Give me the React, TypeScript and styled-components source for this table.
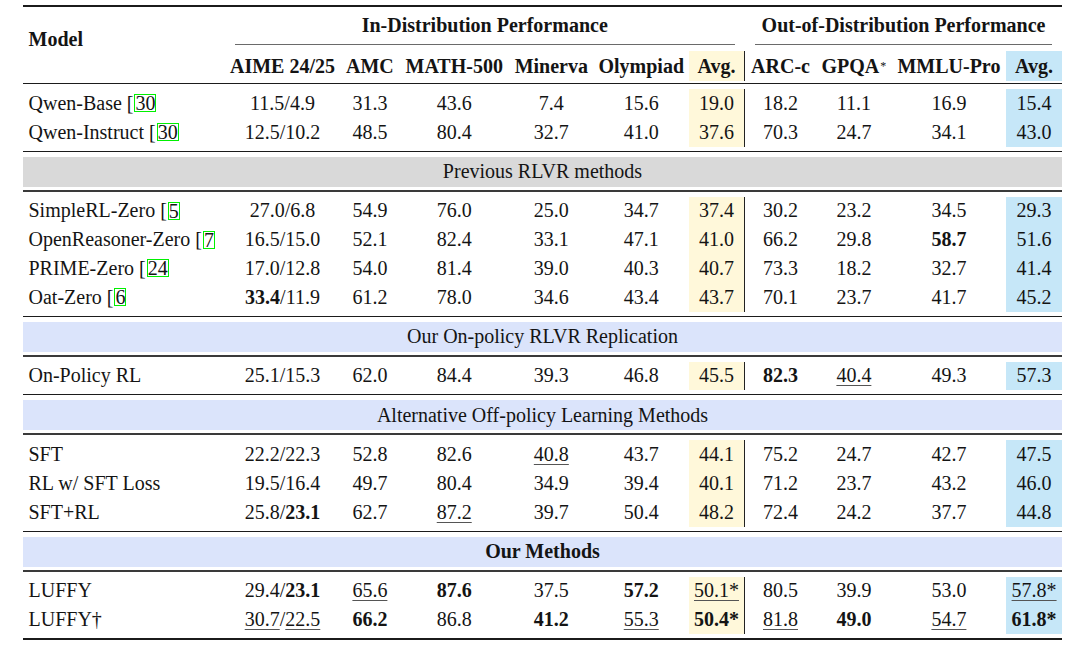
import React from "react";
import styled, { createGlobalStyle } from "styled-components";

const Global = createGlobalStyle`
  html, body { margin: 0; padding: 0; background: #ffffff; }
  body {
    font-family: "Liberation Serif", "Times New Roman", serif;
    color: #141414;
  }
`;

const COLS =
  "201.5px 116px 58.8px 109.9px 84.3px 95.5px 56px 71px 75.8px 114.3px 56px";

type Tone = "none" | "yellow" | "blue";

const TONES: Record<Tone, string> = {
  none: "transparent",
  yellow: "#fff8da",
  blue: "#c6e7f8",
};

const Page = styled.div`
  width: 1080px;
  height: 645px;
  padding: 5px 0 0 23px;
  box-sizing: border-box;
  overflow: hidden;
`;

const Table = styled.div`
  width: 1039px;
  display: flex;
  flex-direction: column;
  font-size: 20px;
`;

const Rule = styled.div<{ $w: number; $c?: string }>`
  height: ${(p) => p.$w}px;
  background: ${(p) => p.$c ?? "#1b1b1b"};
`;

const HeadGrid = styled.div`
  display: grid;
  grid-template-columns: ${COLS};
  grid-template-rows: 38px 30px;
  row-gap: 6px;
  padding-bottom: 2px;
`;

const ModelHead = styled.div`
  grid-row: 1 / 3;
  display: flex;
  align-items: center;
  padding: 0 0 10px 5.5px;
  font-weight: 700;
`;

const GroupHead = styled.div<{ $span: number }>`
  grid-column: span ${(p) => p.$span};
  display: flex;
  padding: 0 10px;
`;

const GroupLabel = styled.div`
  flex: 1;
  display: flex;
  align-items: center;
  justify-content: center;
  border-bottom: 1px solid #6a6a6a;
  font-weight: 700;
  white-space: nowrap;
`;

const ColHead = styled.div<{ $tone: Tone; $bar?: boolean }>`
  display: flex;
  align-items: center;
  justify-content: center;
  font-weight: 700;
  white-space: nowrap;
  background: ${(p) => TONES[p.$tone]};
  box-sizing: border-box;
  border-right: ${(p) => (p.$bar ? "1px solid #222" : "none")};
`;

const Sup = styled.sup`
  font-size: 12px;
  font-weight: 400;
  vertical-align: 7px;
  line-height: 0;
  margin-left: 1px;
`;

const Group = styled.div`
  display: flex;
  flex-direction: column;
  padding: 5px 0 4px;
`;

const Row = styled.div`
  display: grid;
  grid-template-columns: ${COLS};
  height: 28.75px;
`;

const NameCell = styled.div`
  display: flex;
  align-items: center;
  padding-left: 5.5px;
  white-space: nowrap;
`;

const Cell = styled.div<{ $tone: Tone; $bar?: boolean }>`
  display: flex;
  align-items: center;
  justify-content: center;
  white-space: nowrap;
  background: ${(p) => TONES[p.$tone]};
  box-sizing: border-box;
  border-right: ${(p) => (p.$bar ? "1px solid #222" : "none")};
`;

const Cite = styled.span`
  display: inline-block;
  line-height: 16px;
  border: 1.5px solid #00f000;
  margin-left: 1px;
`;

const Band = styled.div<{ $bg: string; $bold?: boolean }>`
  height: 30px;
  margin: 5px 0 3px;
  background: ${(p) => p.$bg};
  display: flex;
  align-items: center;
  justify-content: center;
  font-weight: ${(p) => (p.$bold ? 700 : 400)};
`;

const B = styled.span`
  font-weight: 700;
`;

const U = styled.span`
  text-decoration: underline;
  text-decoration-thickness: 1px;
  text-underline-offset: 3px;
  text-decoration-color: #555;
`;

type RowData = { name: string; cite?: string; vals: string[] };

const GROUPS: { band?: { text: string; bg: string; bold?: boolean }; rows: RowData[] }[] = [
  {
    rows: [
      { name: "Qwen-Base", cite: "30", vals: ["11.5/4.9", "31.3", "43.6", "7.4", "15.6", "19.0", "18.2", "11.1", "16.9", "15.4"] },
      { name: "Qwen-Instruct", cite: "30", vals: ["12.5/10.2", "48.5", "80.4", "32.7", "41.0", "37.6", "70.3", "24.7", "34.1", "43.0"] },
    ],
  },
  {
    band: { text: "Previous RLVR methods", bg: "#d9d9d9" },
    rows: [
      { name: "SimpleRL-Zero", cite: "5", vals: ["27.0/6.8", "54.9", "76.0", "25.0", "34.7", "37.4", "30.2", "23.2", "34.5", "29.3"] },
      { name: "OpenReasoner-Zero", cite: "7", vals: ["16.5/15.0", "52.1", "82.4", "33.1", "47.1", "41.0", "66.2", "29.8", "!58.7!", "51.6"] },
      { name: "PRIME-Zero", cite: "24", vals: ["17.0/12.8", "54.0", "81.4", "39.0", "40.3", "40.7", "73.3", "18.2", "32.7", "41.4"] },
      { name: "Oat-Zero", cite: "6", vals: ["!33.4!/11.9", "61.2", "78.0", "34.6", "43.4", "43.7", "70.1", "23.7", "41.7", "45.2"] },
    ],
  },
  {
    band: { text: "Our On-policy RLVR Replication", bg: "#dbe4fb" },
    rows: [
      { name: "On-Policy RL", vals: ["25.1/15.3", "62.0", "84.4", "39.3", "46.8", "45.5", "!82.3!", "~40.4~", "49.3", "57.3"] },
    ],
  },
  {
    band: { text: "Alternative Off-policy Learning Methods", bg: "#dbe4fb" },
    rows: [
      { name: "SFT", vals: ["22.2/22.3", "52.8", "82.6", "~40.8~", "43.7", "44.1", "75.2", "24.7", "42.7", "47.5"] },
      { name: "RL w/ SFT Loss", vals: ["19.5/16.4", "49.7", "80.4", "34.9", "39.4", "40.1", "71.2", "23.7", "43.2", "46.0"] },
      { name: "SFT+RL", vals: ["25.8/!23.1!", "62.7", "~87.2~", "39.7", "50.4", "48.2", "72.4", "24.2", "37.7", "44.8"] },
    ],
  },
  {
    band: { text: "Our Methods", bg: "#dbe4fb", bold: true },
    rows: [
      { name: "LUFFY", vals: ["29.4/!23.1!", "~65.6~", "!87.6!", "37.5", "!57.2!", "~50.1*~", "80.5", "39.9", "53.0", "~57.8*~"] },
      { name: "LUFFY†", vals: ["~30.7~/~22.5~", "!66.2!", "86.8", "!41.2!", "~55.3~", "!50.4*!", "~81.8~", "!49.0!", "~54.7~", "!61.8*!"] },
    ],
  },
];

const HEADS = ["AIME 24/25", "AMC", "MATH-500", "Minerva", "Olympiad", "Avg.", "ARC-c", "GPQA", "MMLU-Pro", "Avg."];

const toneOf = (i: number): Tone => (i === 5 ? "yellow" : i === 9 ? "blue" : "none");

function renderValue(s: string) {
  const parts = s.match(/![^!]+!|~[^~]+~|[^!~]+/g) ?? [];
  return parts.map((p, i) => {
    if (p.startsWith("!")) return <B key={i}>{p.slice(1, -1)}</B>;
    if (p.startsWith("~")) return <U key={i}>{p.slice(1, -1)}</U>;
    return <React.Fragment key={i}>{p}</React.Fragment>;
  });
}

export default function App() {
  return (
    <Page>
      <Global />
      <Table>
        <Rule $w={2} />
        <HeadGrid>
          <ModelHead>Model</ModelHead>
          <GroupHead $span={6}>
            <GroupLabel>In-Distribution Performance</GroupLabel>
          </GroupHead>
          <GroupHead $span={4}>
            <GroupLabel>Out-of-Distribution Performance</GroupLabel>
          </GroupHead>
          {HEADS.map((h, i) => (
            <ColHead key={i} $tone={toneOf(i)} $bar={i === 5}>
              {h}
              {h === "GPQA" && <Sup>*</Sup>}
            </ColHead>
          ))}
        </HeadGrid>
        <Rule $w={1} />
        {GROUPS.map((g, gi) => (
          <React.Fragment key={gi}>
            {g.band && (
              <>
                <Band $bg={g.band.bg} $bold={g.band.bold}>
                  {g.band.text}
                </Band>
                <Rule $w={2} $c="#3a3a3a" />
              </>
            )}
            <Group>
              {g.rows.map((r, ri) => (
                <Row key={ri}>
                  <NameCell>
                    {r.name}
                    {r.cite && (
                      <>
                        &nbsp;[<Cite>{r.cite}</Cite>
                      </>
                    )}
                  </NameCell>
                  {r.vals.map((v, vi) => (
                    <Cell key={vi} $tone={toneOf(vi)} $bar={vi === 5}>
                      {renderValue(v)}
                    </Cell>
                  ))}
                </Row>
              ))}
            </Group>
            <Rule $w={gi === GROUPS.length - 1 ? 2 : 1} />
          </React.Fragment>
        ))}
      </Table>
    </Page>
  );
}
